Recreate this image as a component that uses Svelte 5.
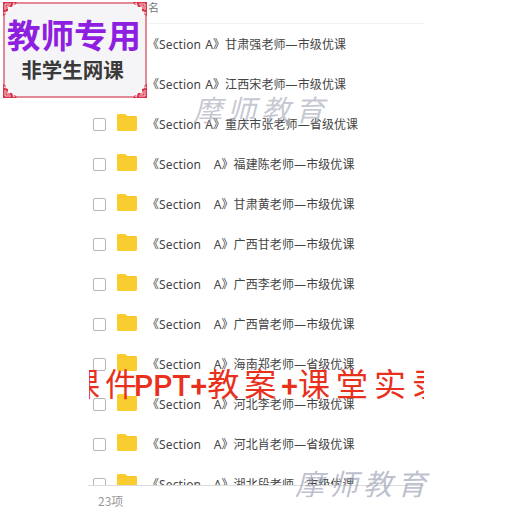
<script lang="ts">
	const rows = [
		'《Section A》甘肃强老师—市级优课',
		'《Section A》江西宋老师—市级优课',
		'《Section A》重庆市张老师—省级优课',
		'《Section\u00a0\u00a0\u00a0A》福建陈老师—市级优课',
		'《Section\u00a0\u00a0\u00a0A》甘肃黄老师—市级优课',
		'《Section\u00a0\u00a0\u00a0A》广西甘老师—市级优课',
		'《Section\u00a0\u00a0\u00a0A》广西李老师—市级优课',
		'《Section\u00a0\u00a0\u00a0A》广西曾老师—市级优课',
		'《Section\u00a0\u00a0\u00a0A》海南郑老师—省级优课',
		'《Section\u00a0\u00a0\u00a0A》河北李老师—市级优课',
		'《Section\u00a0\u00a0\u00a0A》河北肖老师—省级优课',
		'《Section\u00a0\u00a0\u00a0A》湖北段老师—市级优课'
	];
	const corners = ['tl', 'tr', 'bl', 'br'];
</script>

<main class="page">
	<section class="files">
		<div class="list">
			<div class="head">名</div>
			{#each rows as name}
				<div class="row">
					<span class="check"></span>
					<svg class="folder" viewBox="0 0 20 17" aria-hidden="true">
						<path d="M1.500 0H7.500Q8.500 0 9.200 .8L10.200 2H18.500A1.500 1.500 0 0 1 20 3.500V15.500A1.500 1.500 0 0 1 18.500 17H1.500A1.500 1.500 0 0 1 0 15.500V1.500A1.500 1.500 0 0 1 1.500 0Z" fill="#f9cd2f" />
						<path d="M0 3H20" stroke="#eebd20" stroke-width="0.6" opacity="0.5" />
					</svg>
					<span class="name">{name}</span>
				</div>
			{/each}
		</div>
		<footer class="count">23项</footer>
	</section>

	<!-- stamped over the screenshot -->
	<div class="badge">
		{#each corners as c}
			<svg class="corner {c}" viewBox="0 0 14 14" aria-hidden="true">
				<path d="M0 0H14L12 3 10 2 9 5 5 5 5 9 2 10 3 12 0 14Z" fill="#d8334a" />
				<path d="M2 2H8M2 2V8M4 4H7M4 4V7M10 1L12 2M1 10L2 12M6 7L8 7M7 6L7 8" stroke="#fff" stroke-width="0.8" />
			</svg>
		{/each}
		<div class="badge-title">教师专用</div>
		<div class="badge-sub">非学生网课</div>
	</div>
	<div class="mark mark-top">摩师教育</div>
	<div class="mark mark-bottom">摩师教育</div>
	<div class="banner">
		<span class="banner-line"><span class="han first">课件</span><span class="latin">PPT+</span><span class="han">教案</span><span class="latin">+</span><span class="han wide">课堂实录</span></span>
	</div>
</main>

<style>
	:global(body) {
		background: #fff;
	}

	.page {
		position: relative;
		width: 513px;
		height: 513px;
		overflow: hidden;
		background: #fff;
		font-family: 'Noto Sans CJK SC', 'Liberation Sans', sans-serif;
	}

	.files {
		width: 336px;
		margin-left: 88px;
		height: 513px;
		display: flex;
		flex-direction: column;
	}

	.list {
		height: 485px;
		flex: none;
		overflow: hidden;
		border-bottom: 1px solid #dcdcdc;
	}

	.head {
		height: 23px;
		margin-left: 60px;
		border-bottom: 1px solid #f1f1f1;
		font-size: 11px;
		line-height: 15px;
		color: #777;
	}

	.row {
		height: 40px;
		display: flex;
		align-items: center;
		padding-left: 5px;
	}

	.check {
		flex: none;
		width: 11px;
		height: 11px;
		border: 1px solid #b5b5b5;
		border-radius: 2px;
		background: #fff;
	}

	.folder {
		flex: none;
		width: 20px;
		height: 17px;
		margin: -3px 0 0 11px;
	}

	.name {
		margin: 2px 0 0 10px;
		font-family: 'Noto Sans', 'Noto Sans CJK SC', sans-serif;
		font-size: 12px;
		letter-spacing: 0.1px;
		word-spacing: 1px;
		line-height: 16px;
		color: #444;
		white-space: nowrap;
	}

	.count {
		padding: 6px 0 0 10px;
		font-size: 12px;
		line-height: 18px;
		color: #999;
	}

	.badge {
		position: absolute;
		left: 3px;
		top: 2px;
		width: 140px;
		height: 92px;
		border: 2px solid #e38a97;
		background: #f5f4f6;
		display: flex;
		flex-direction: column;
		align-items: center;
	}

	.badge-title {
		margin-top: 10px;
		margin-right: 2px;
		font-size: 33.500px;
		line-height: 40px;
		font-weight: 700;
		color: #8f1fe0;
		white-space: nowrap;
	}

	.badge-sub {
		margin-top: 2px;
		margin-right: 5px;
		font-size: 20.500px;
		line-height: 26px;
		font-weight: 700;
		color: #3a3a3a;
		white-space: nowrap;
	}

	.corner {
		position: absolute;
		width: 14px;
		height: 14px;
	}
	.tl { left: -2px; top: -2px; }
	.tr { right: -2px; top: -2px; transform: scaleX(-1); }
	.bl { left: -2px; bottom: -2px; transform: scaleY(-1); }
	.br { right: -2px; bottom: -2px; transform: scale(-1, -1); }

	.mark {
		position: absolute;
		font-family: 'Liberation Serif', 'Noto Sans CJK JP', serif;
		font-style: italic;
		font-size: 29px;
		line-height: 32px;
		letter-spacing: 5px;
		color: rgba(160, 165, 180, 0.6);
		white-space: nowrap;
	}
	.mark-top {
		left: 193px;
		top: 95px;
	}
	.mark-bottom {
		left: 295px;
		top: 469px;
		color: rgba(150, 155, 175, 0.65);
	}

	.banner {
		position: absolute;
		left: 89px;
		top: 357px;
		width: 335px;
		height: 50px;
		overflow: hidden;
		white-space: nowrap;
		line-height: 50px;
		color: #e8301c;
	}
	.banner-line {
		display: inline-block;
		margin-left: -21px;
	}
	.han {
		font-family: 'Noto Sans CJK SC', sans-serif;
		font-size: 32px;
		letter-spacing: 5px;
	}
	.han.first {
		margin-right: -8px;
	}
	.han.wide {
		letter-spacing: 6px;
	}
	.latin {
		font-family: Roboto, 'Liberation Sans', sans-serif;
		font-size: 30px;
		font-weight: 500;
	}
</style>
